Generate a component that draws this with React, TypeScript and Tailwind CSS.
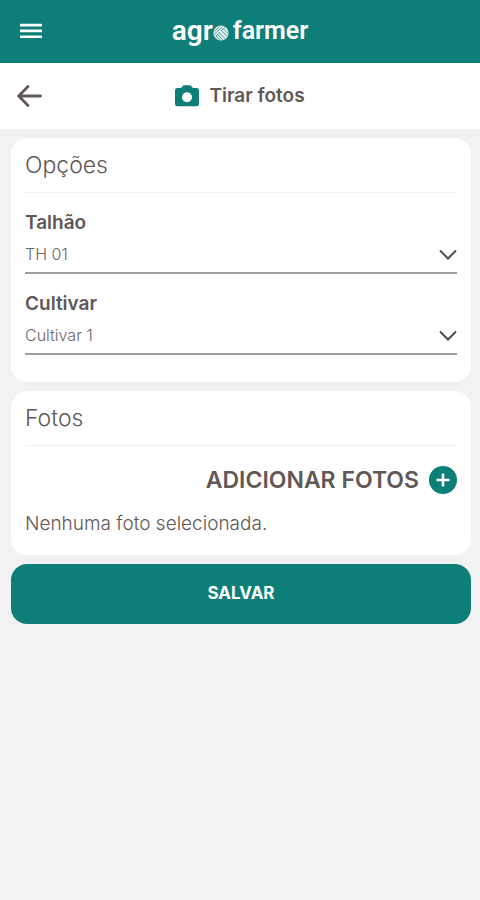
import { useState } from 'react';

interface SelectFieldProps {
  id: string;
  label: string;
  value: string;
  options: string[];
  onChange: (value: string) => void;
}

function Logo() {
  return (
    <div className="flex items-center font-[Roboto,sans-serif] text-white">
      <span className="text-[28px] leading-8 font-semibold">agr</span>
      <svg viewBox="0 0 16 16" className="mt-1 size-4" fill="none" aria-hidden="true">
        <circle cx="8" cy="8" r="7.6" fill="#e4f1f0" />
        <g stroke="#0d7f78" strokeWidth="0.7" strokeLinecap="round">
          <path d="M1.8 6.2 6.5 1.7M1.6 9 9.3 2M3 11l3.6-3.4M8.5 5.6l3.2-3" />
          <path d="M6.3 7.8l5.8 5.6M4.6 9.6l4.8 4.8M8.6 5.9l5.5 5.2M10.6 4.2l4 3.8" />
          <path d="M3.1 11.2l3.4 3.3" />
        </g>
      </svg>
      <span className="ml-1 text-[25px] leading-8 font-semibold">farmer</span>
    </div>
  );
}

function SelectField({ id, label, value, options, onChange }: SelectFieldProps) {
  return (
    <div>
      <label htmlFor={id} className="block text-[19px] leading-6 font-semibold">{label}</label>
      <div className="relative">
        <select
          id={id}
          value={value}
          onChange={(e) => onChange(e.target.value)}
          className="block h-[39px] w-full appearance-none border-b-2 border-[#a19d9d] bg-transparent pr-8 text-base font-light text-[#6b6666] outline-none"
        >
          {options.map(option => (
            <option key={option} value={option}>{option}</option>
          ))}
        </select>
        <svg
          viewBox="0 0 18 12"
          className="pointer-events-none absolute top-3.5 right-0 h-3 w-[18px]"
          fill="none"
          stroke="#514b4b"
          strokeWidth="2"
          aria-hidden="true"
        >
          <path d="M1 1.5 9 9.5 17 1.5" />
        </svg>
      </div>
    </div>
  );
}

export default function App() {
  const [talhao, setTalhao] = useState('TH 01');
  const [cultivar, setCultivar] = useState('Cultivar 1');

  return (
    <div className="min-h-screen bg-[#f2f2f2] font-[Inter,sans-serif] text-[#625757]">
      <header className="grid h-[63px] grid-cols-[1fr_auto_1fr] items-center bg-[#0d7f78] px-5 pb-0.5">
        <button type="button" aria-label="Menu" className="justify-self-start">
          <svg viewBox="0 0 22 16" className="h-4 w-[22px]" fill="#ffffff" aria-hidden="true">
            <rect y="0.8" width="22" height="2.6" rx="0.6" />
            <rect y="6.6" width="22" height="2.6" rx="0.6" />
            <rect y="12.4" width="22" height="2.6" rx="0.6" />
          </svg>
        </button>
        <Logo />
      </header>

      <div className="grid h-[66px] grid-cols-[1fr_auto_1fr] items-center bg-white px-[17px]">
        <button type="button" aria-label="Voltar" className="justify-self-start">
          <svg
            viewBox="0 0 25 22"
            className="h-[22px] w-[25px]"
            fill="none"
            stroke="#625757"
            strokeWidth="2.8"
            strokeLinecap="round"
            strokeLinejoin="round"
            aria-hidden="true"
          >
            <path d="M23.5 11H2M11 1.5 1.7 11 11 20.5" />
          </svg>
        </button>
        <h1 className="flex items-center gap-2.5 text-[19px] leading-6 font-semibold">
          <svg viewBox="0 0 24 22" className="h-[22px] w-6" aria-hidden="true">
            <path
              fill="#0d7f78"
              fillRule="evenodd"
              d="M2.5 3H6L7.8.9Q8.4.3 9.2.3h5.6q.8 0 1.4.6L18 3h3.5Q24 3 24 5.5v13.3q0 2.5-2.5 2.5h-19Q0 21.3 0 18.8V5.5Q0 3 2.5 3ZM12 7.3a5 5 0 1 0 0 10 5 5 0 0 0 0-10Z"
            />
          </svg>
          Tirar fotos
        </h1>
      </div>

      <main className="flex flex-col gap-[9px] pt-[9px] pr-[9px] pl-[11px]">
        <section className="rounded-2xl bg-white px-3.5 pb-[27px]">
          <h2 className="border-b border-[#f0f0f0] py-[11px] text-[23px] leading-8 font-light">Opções</h2>
          <div className="flex flex-col gap-[18px] pt-[18px]">
            <SelectField
              id="talhao"
              label="Talhão"
              value={talhao}
              options={['TH 01', 'TH 02']}
              onChange={setTalhao}
            />
            <SelectField
              id="cultivar"
              label="Cultivar"
              value={cultivar}
              options={['Cultivar 1', 'Cultivar 2']}
              onChange={setCultivar}
            />
          </div>
        </section>

        <section className="rounded-2xl bg-white px-3.5 pb-[19px]">
          <h2 className="border-b border-[#f0f0f0] py-[11px] text-[23px] leading-8 font-light">Fotos</h2>
          <div className="flex justify-end pt-5">
            <button type="button" className="flex items-center gap-2.5 text-[23px] leading-7 font-semibold">
              ADICIONAR FOTOS
              <svg viewBox="0 0 28 28" className="size-7" aria-hidden="true">
                <circle cx="14" cy="14" r="14" fill="#0d7f78" />
                <path d="M14 7.5v13M7.5 14h13" stroke="#ffffff" strokeWidth="2.6" />
              </svg>
            </button>
          </div>
          <p className="pt-[18px] text-[19px] leading-6 font-light">Nenhuma foto selecionada.</p>
        </section>

        <button type="button" className="h-[60px] rounded-2xl bg-[#0d7f78] text-[17px] font-bold text-white">
          SALVAR
        </button>
      </main>
    </div>
  );
}
